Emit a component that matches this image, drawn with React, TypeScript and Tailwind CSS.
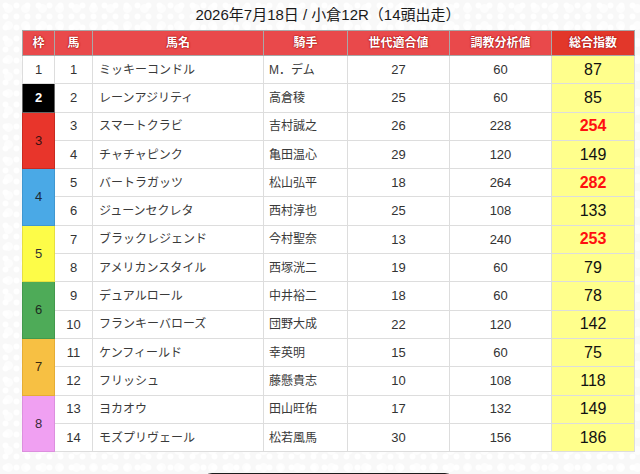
import { twMerge } from 'tailwind-merge';

type Horse = {
  waku: number;
  no: number;
  name: string;
  jockey: string;
  gen: number;
  train: number;
  total: number;
};

const horses: Horse[] = [
  { waku: 1, no: 1, name: 'ミッキーコンドル', jockey: 'M．デム', gen: 27, train: 60, total: 87 },
  { waku: 2, no: 2, name: 'レーンアジリティ', jockey: '高倉稜', gen: 25, train: 60, total: 85 },
  { waku: 3, no: 3, name: 'スマートクラビ', jockey: '吉村誠之', gen: 26, train: 228, total: 254 },
  { waku: 3, no: 4, name: 'チャチャピンク', jockey: '亀田温心', gen: 29, train: 120, total: 149 },
  { waku: 4, no: 5, name: 'バートラガッツ', jockey: '松山弘平', gen: 18, train: 264, total: 282 },
  { waku: 4, no: 6, name: 'ジューンセクレタ', jockey: '西村淳也', gen: 25, train: 108, total: 133 },
  { waku: 5, no: 7, name: 'ブラックレジェンド', jockey: '今村聖奈', gen: 13, train: 240, total: 253 },
  { waku: 5, no: 8, name: 'アメリカンスタイル', jockey: '西塚洸二', gen: 19, train: 60, total: 79 },
  { waku: 6, no: 9, name: 'デュアルロール', jockey: '中井裕二', gen: 18, train: 60, total: 78 },
  { waku: 6, no: 10, name: 'フランキーバローズ', jockey: '団野大成', gen: 22, train: 120, total: 142 },
  { waku: 7, no: 11, name: 'ケンフィールド', jockey: '幸英明', gen: 15, train: 60, total: 75 },
  { waku: 7, no: 12, name: 'フリッシュ', jockey: '藤懸貴志', gen: 10, train: 108, total: 118 },
  { waku: 8, no: 13, name: 'ヨカオウ', jockey: '田山旺佑', gen: 17, train: 132, total: 149 },
  { waku: 8, no: 14, name: 'モズプリヴェール', jockey: '松若風馬', gen: 30, train: 156, total: 186 },
];

// 枠色
const wakuStyle: Record<number, string> = {
  1: 'bg-white text-[#333]',
  2: 'bg-black text-white font-bold border-[#666]',
  3: 'bg-[#e8352b] text-[#3a1010] border-[#c92a20]',
  4: 'bg-[#4aa9e6] text-[#1c2a36] border-[#3f97d0]',
  5: 'bg-[#fdfc48] text-[#333] border-[#e6e040]',
  6: 'bg-[#4eab58] text-[#1d2d1f] border-[#43994c]',
  7: 'bg-[#f7c043] text-[#3a2a10] border-[#e5ad35]',
  8: 'bg-[#f0a0f2] text-[#3a2a3a] border-[#dc8fde]',
};

const th =
  'border border-[#a8a8a8] text-[12px] font-bold text-white [text-shadow:0_0_2px_#a11,0_0_1px_#a11,0_0_1px_#a11]';

export default function App() {
  return (
    <main className="min-h-screen w-full bg-[#f8f8f8] bg-[radial-gradient(circle,#ffffff_0,#ffffff_2.5px,transparent_3.5px),radial-gradient(circle,#fdfdfd_0,#fdfdfd_4px,transparent_5px)] bg-[length:11px_11px,17px_17px] pl-[22px] font-['Liberation_Sans','Noto_Sans_CJK_JP',sans-serif]">
      <div className="flex w-[612px] flex-col">
        <h1 className="flex h-[30px] items-center justify-center text-[15px] text-[#1a1a1a]">
          2026年7月18日 / 小倉12R（14頭出走）
        </h1>

        <table className="w-[612px] table-fixed border-collapse bg-white">
          <colgroup>
            <col className="w-[32px]" />
            <col className="w-[38px]" />
            <col className="w-[171px]" />
            <col className="w-[84px]" />
            <col className="w-[102px]" />
            <col className="w-[102px]" />
            <col className="w-[83px]" />
          </colgroup>
          <thead>
            <tr className="h-[25px] bg-[#e9494b]">
              <th className={th}>枠</th>
              <th className={th}>馬</th>
              <th className={th}>馬名</th>
              <th className={th}>騎手</th>
              <th className={th}>世代適合値</th>
              <th className={th}>調教分析値</th>
              <th className={twMerge(th, 'bg-[#e2372a]')}>総合指数</th>
            </tr>
          </thead>
          <tbody>
            {horses.map((h, i) => {
              const first = i === 0 || horses[i - 1].waku !== h.waku;
              const span = horses.filter((x) => x.waku === h.waku).length;
              return (
                <tr key={h.no} className="h-[28.3px] text-[13px] text-[#333]">
                  {first && (
                    <td
                      rowSpan={span}
                      className={twMerge(
                        'border border-[#ddd] text-center text-[13px]',
                        wakuStyle[h.waku]
                      )}
                    >
                      {h.waku}
                    </td>
                  )}
                  <td className="border border-[#ddd] text-center">{h.no}</td>
                  <td className="border border-[#ddd] pl-[6px] text-left text-[12px] text-[#3a3a3a]">
                    {h.name}
                  </td>
                  <td className="border border-[#ddd] pl-[5px] text-left text-[12px] text-[#3a3a3a]">
                    {h.jockey}
                  </td>
                  <td className="border border-[#ddd] text-center">{h.gen}</td>
                  <td className="border border-[#ddd] text-center">{h.train}</td>
                  <td
                    className={twMerge(
                      'border border-[#ddd] bg-[#ffff8c] text-center text-[16px] text-[#111]',
                      h.total >= 250 && 'font-bold text-[#ff1010]'
                    )}
                  >
                    {h.total}
                  </td>
                </tr>
              );
            })}
          </tbody>
        </table>

        <div className="mt-[21px] flex justify-center">
          <div className="h-[10px] w-[253px] rounded-t-[10px] bg-[#1c1c1c]" />
        </div>
      </div>
    </main>
  );
}
